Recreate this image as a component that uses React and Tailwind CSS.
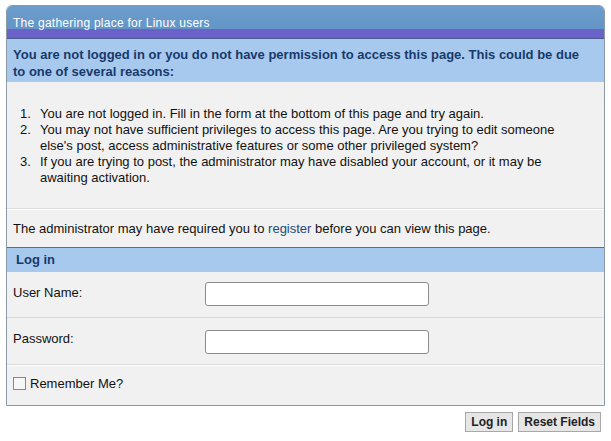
import React from "react";

const font = { fontFamily: '"Liberation Sans", Arial, sans-serif' };

const reasons = [
  "You are not logged in. Fill in the form at the bottom of this page and try again.",
  "You may not have sufficient privileges to access this page. Are you trying to edit someone else's post, access administrative features or some other privileged system?",
  "If you are trying to post, the administrator may have disabled your account, or it may be awaiting activation.",
];

export default function App() {
  return (
    <div className="w-[611px] h-[441px] bg-white pt-[5px] px-[6px] text-[13px] text-[#111]" style={font}>
      <div className="border border-[#8c9aa6] rounded-t-[6px] overflow-hidden bg-[#f1f1f1]">
        {/* top banner */}
        <div className="h-[23px] bg-gradient-to-b from-[#6c9dcd] to-[#6395c6] text-white text-[12px] tracking-[0.25px] pl-[6px] pt-[11px] leading-[12px]">
          The gathering place for Linux users
        </div>
        <div className="h-[10px] bg-[#6a62c8] border-b border-[#4a5b8c]" />

        <div className="bg-[#a8c9ee] pl-[6px] pr-[22px] pt-[7px] pb-[2px] text-[13px] font-bold leading-[17px] text-[#173a6b]">
          You are not logged in or you do not have permission to access this page. This could be due to one of several reasons:
        </div>

        <div className="pt-[24px] pb-[22px] border-b border-[#dcdcdc]">
          <ol className="pl-[13px] pr-[20px] leading-[16px]">
            {reasons.map((r, i) => (
              <li key={i} className="flex">
                <span className="w-[20px] shrink-0">{i + 1}.</span>
                <span className="flex-1">{r}</span>
              </li>
            ))}
          </ol>
        </div>

        <div className="h-[38px] flex items-center pl-[6px] border-t border-white">
          The administrator may have required you to&nbsp;<a className="text-[#22497a]" href="#">register</a>&nbsp;before you can view this page.
        </div>

        <div className="h-[25px] bg-[#a8c9ee] border-t border-[#4f6f97] flex items-center pl-[9px] text-[13px] font-bold text-[#173a6b]">
          Log in
        </div>

        <div className="h-[46px] flex border-b border-[#dadada]">
          <div className="w-[198px] pl-[6px] pt-[11px]">User Name:</div>
          <div className="pt-[10px]">
            <input type="text" className="w-[224px] h-[24px] bg-white border border-[#8c8c8c] rounded-[3px]" />
          </div>
        </div>
        <div className="h-[47px] flex border-b border-[#dadada]">
          <div className="w-[198px] pl-[6px] pt-[11px]">Password:</div>
          <div className="pt-[12px]">
            <input type="password" className="w-[224px] h-[24px] bg-white border border-[#8c8c8c] rounded-[3px]" />
          </div>
        </div>
        <div className="h-[40px] flex items-start pt-[10px] pl-[6px] border-t border-white">
          <span className="w-[13px] h-[13px] border border-[#7a8a99] bg-[#f6f6f6] mr-[4px] mt-[1px]" />
          <span className="leading-[16px]">Remember Me?</span>
        </div>
      </div>

      <div className="flex justify-end gap-[5px] mt-[6px] pr-[4px]">
        <button className="h-[20px] px-[5px] bg-[#e6e6e6] border border-[#a8a8a8] text-[12px] font-bold text-[#222] leading-none">
          Log in
        </button>
        <button className="h-[20px] px-[5px] bg-[#e6e6e6] border border-[#a8a8a8] text-[12px] font-bold text-[#222] leading-none">
          Reset Fields
        </button>
      </div>
    </div>
  );
}
